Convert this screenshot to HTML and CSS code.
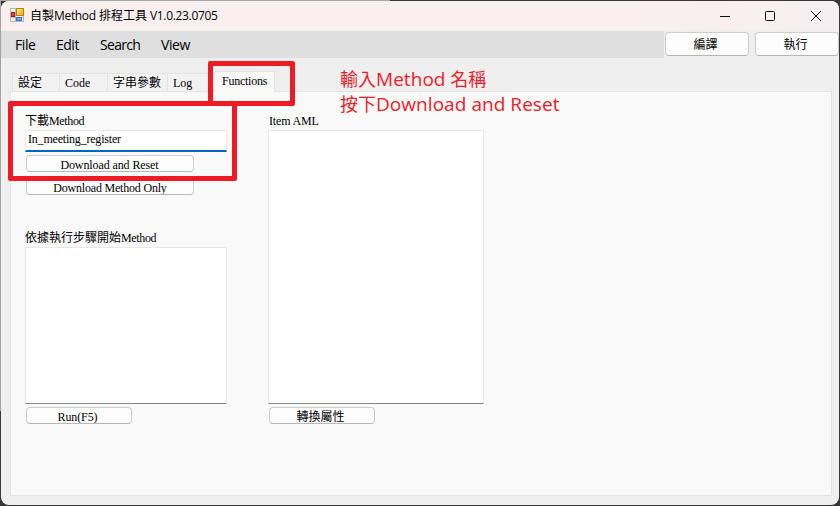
FILE: index.html
```
<!DOCTYPE html>
<html lang="zh-Hant">
<head>
<meta charset="utf-8">
<title>自製Method 排程工具</title>
<link rel="stylesheet" href="styles.css">
</head>
<body>
<div class="window">
  <header class="titlebar">
    <svg class="app-icon" width="14" height="14" viewBox="0 0 14 14">
      <defs>
        <linearGradient id="gold" x1="0" y1="0" x2="1" y2="1"><stop offset="0" stop-color="#ffeb91"/><stop offset="1" stop-color="#e8a500"/></linearGradient>
      </defs>
      <rect x=".5" y=".5" width="13" height="13" fill="#f4f4f4" stroke="#b4b4b4"/>
      <path d="M5.5 0v14M0 9.5h14" stroke="#b4b4b4"/>
      <rect x="6.5" y=".5" width="7" height="7" fill="url(#gold)" stroke="#b98405"/>
      <rect x="1.5" y="4.5" width="3" height="4" fill="#d84430" stroke="#a91f14"/>
      <rect x="6.5" y="9.5" width="5" height="3" fill="#6ca8fa" stroke="#3b70cc"/>
    </svg>
    <h1 class="caption">自製<span>Method</span> 排程工具 <span>V1.0.23.0705</span></h1>
    <svg class="controls" width="96" height="12" viewBox="0 0 96 12" fill="none" stroke="#111">
      <path d="M0 6.5h10"/>
      <rect x="45.5" y="1.5" width="9" height="9" rx="1"/>
      <path d="M91 1l10 10M101 1L91 11"/>
    </svg>
  </header>
  <nav class="menubar">
    <span class="menu file">File</span>
    <span class="menu edit">Edit</span>
    <span class="menu search">Search</span>
    <span class="menu view">View</span>
    <div class="actions">
      <button class="action">編譯</button>
      <button class="action">執行</button>
    </div>
  </nav>
  <div class="tabs">
    <div class="tab t1">設定</div>
    <div class="tab t2">Code</div>
    <div class="tab t3">字串參數</div>
    <div class="tab t4">Log</div>
    <div class="tab active"><span>Functions</span></div>
  </div>
  <main class="panel">
    <section class="column left">
      <label class="label">下載<span class="latin">Method</span></label>
      <div class="input">In_meeting_register</div>
      <button class="btn wide first"><span class="s1">Download and Reset</span></button>
      <button class="btn wide second"><span class="s2">Download Method Only</span></button>
      <label class="label steps">依據執行步驟開始<span class="latin">Method</span></label>
      <div class="area small"></div>
      <button class="btn"><span class="s3">Run(F5)</span></button>
    </section>
    <section class="column right">
      <label class="label aml">Item AML</label>
      <div class="area tall"></div>
      <button class="btn"><span class="s4">轉換屬性</span></button>
    </section>
  </main>
  <div class="mark mark-tab"></div>
  <div class="mark mark-form"></div>
  <div class="note"><div>輸入<span>Method</span> 名稱</div><div>按下<span>Download and Reset</span></div></div>
</div>
</body>
</html>
```
FILE: styles.css
```
* { box-sizing: border-box; }
html { background: #383838; }
body {
  margin: 0;
  padding: 1px;
  width: 840px;
  height: 506px;
  overflow: hidden;
  color: #000;
  background: linear-gradient(#a6a6aa, #a6a6aa) 0 0 / 390px 1px no-repeat,
    linear-gradient(#a3a3a3, #a3a3a3) 0 0 / 1px 411px no-repeat, #383838;
  font-family: "Liberation Serif", "Noto Sans CJK TC", serif;
  font-size: 12px;
}
button { font: inherit; color: inherit; padding: 0; }
.window {
  position: relative;
  width: 838px;
  height: 504px;
  background: #efefef;
  border-radius: 8px;
  overflow: hidden;
}
.titlebar {
  display: flex;
  align-items: center;
  height: 30px;
  padding-left: 9px;
  background: linear-gradient(90deg, #f9efee 70%, #f6eff1);
}
.app-icon { flex: none; margin-top: -2px; }
.caption {
  margin: 0 0 0 6px;
  font: 12px/30px "Open Sans", "Noto Sans CJK TC", sans-serif;
  white-space: nowrap;
}
.caption span { letter-spacing: -.33px; }
.controls { margin: 0 23px 0 auto; overflow: visible; }
.menubar {
  display: flex;
  height: 27px;
  padding-left: 14px;
  background: linear-gradient(90deg, #dfdfdf 663px, #efefef 663px);
  font: 14px/28px "Open Sans", sans-serif;
}
.menu { flex: none; white-space: nowrap; letter-spacing: -.4px; }
.file { width: 41px; }
.edit { width: 44px; letter-spacing: -.7px; }
.edit { letter-spacing: -.5px; }
.search { width: 61px; letter-spacing: -.7px; }
.actions {
  display: flex;
  gap: 6px;
  margin-left: auto;
  padding-top: 1px;
}
.action {
  width: 84px;
  height: 24px;
  border: 1px solid #ccc;
  border-bottom-color: #b5b5b5;
  border-radius: 4px;
  background: #fdfdfd;
  font: 12px/20px "Noto Sans CJK TC", sans-serif;
}
.action { padding-right: 3px; }
.tabs {
  display: flex;
  align-items: flex-end;
  height: 33px;
  padding-left: 11px;
}
.tab {
  height: 18px;
  padding-left: 5px;
  border: 1px solid #e3e3e3;
  border-width: 1px 0 0 1px;
  background: #f2f2f2;
  line-height: 18px;
  white-space: nowrap;
}
.t1 { width: 47px; }
.t2 { width: 48px; }
.t3 { width: 60px; }
.t4 { width: 47px; }
.tab.active {
  position: relative;
  z-index: 1;
  width: 61px;
  height: 21px;
  margin-bottom: -1px;
  padding-left: 7px;
  border-right-width: 1px;
  background: #f9f9f9;
  letter-spacing: -.25px;
}
.panel {
  display: flex;
  gap: 41px;
  width: 822px;
  height: 405px;
  margin-left: 9px;
  padding: 20px 0 0 14px;
  border: 1px solid #e3e3e3;
  background: #f9f9f9;
}
.column { display: flex; flex-direction: column; align-items: flex-start; }
.left { width: 202px; }
.right { width: 216px; }
.label { height: 18px; line-height: 18px; white-space: nowrap; }
.latin { letter-spacing: -.35px; }
.aml { padding-left: 1px; letter-spacing: -.15px; }
.input {
  width: 202px;
  height: 22px;
  padding-left: 2px;
  border: 1px solid #e5e9ed;
  border-left-color: #eee;
  border-bottom: 2px solid #0067c0;
  background: #fff;
  line-height: 17px;
  letter-spacing: -.2px;
}
.btn {
  width: 106px;
  height: 17px;
  margin: 3px 0 0 1px;
  border: 1px solid #ccc;
  border-bottom-color: #b8b8b8;
  border-radius: 4px;
  background: #fdfdfd;
  line-height: 16px;
  overflow: hidden;
}
.btn span { display: block; height: 14px; overflow: hidden; white-space: nowrap; }
.wide { width: 168px; }
.second { margin-top: 6px; }
.s1 { letter-spacing: -.1px; padding-right: 1px; }
.s2 { letter-spacing: -.2px; }
.s3 { padding-right: 3px; letter-spacing: -.1px; }
.s4 { padding-right: 3px; }
.steps { margin-top: 34px; }
.area { border: 1px solid #e8e8e8; border-bottom-color: #858585; background: #fff; }
.small { width: 202px; height: 157px; }
.tall { width: 216px; height: 274px; }
.mark { position: absolute; border: 5px solid #ed1c24; border-radius: 2px; z-index: 2; }
.mark-tab { left: 207px; top: 60px; width: 87px; height: 45px; }
.mark-form { left: 7px; top: 100px; width: 229px; height: 80px; }
.note {
  position: absolute;
  z-index: 2;
  left: 339px;
  top: 66px;
  color: #ed2028;
  font: 18px/25px "Open Sans", "Noto Sans CJK TC", sans-serif;
  font-weight: 400;
  white-space: nowrap;
}
.note span { font-size: 19px; letter-spacing: .05px; }
```
